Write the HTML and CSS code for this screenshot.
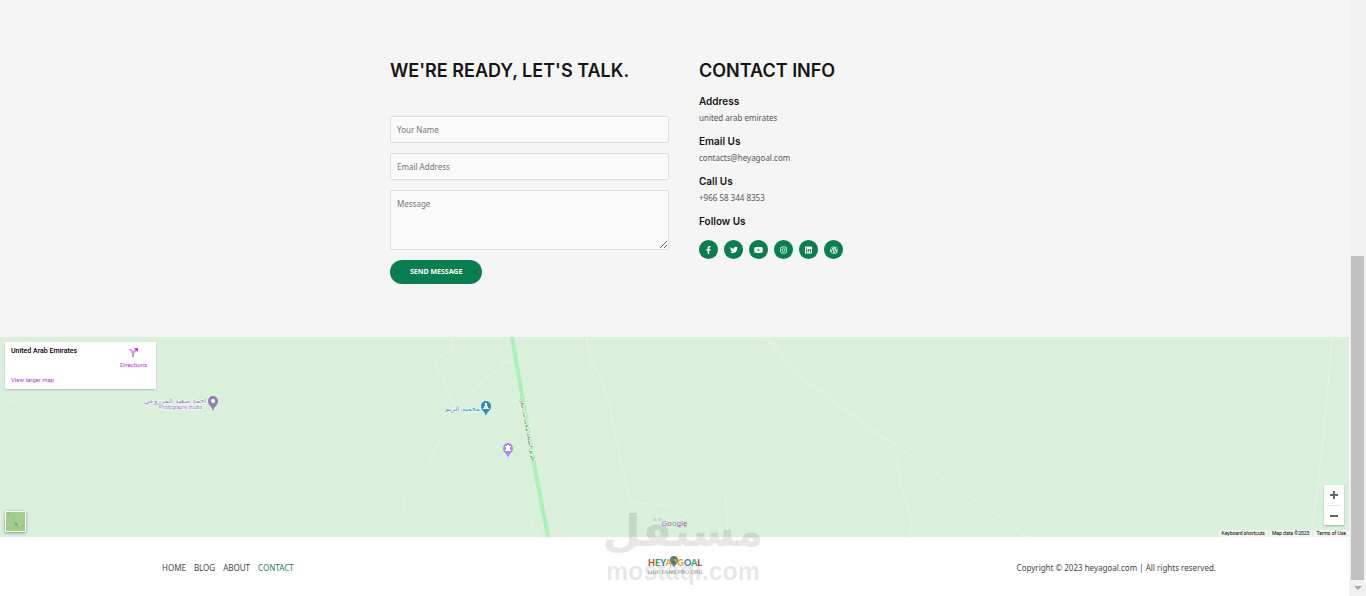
FILE: index.html
```html
<!DOCTYPE html>
<html lang="en">
<head>
<meta charset="utf-8">
<meta name="viewport" content="width=device-width, initial-scale=1">
<title>Contact</title>
<link rel="stylesheet" href="styles.css">
</head>
<body>
<div class="page">
  <main class="contact">
    <section class="talk">
      <h2 class="title">WE'RE READY, LET'S TALK.</h2>
      <form class="form">
        <input class="field" type="text" placeholder="Your Name" aria-label="Your Name">
        <input class="field" type="email" placeholder="Email Address" aria-label="Email Address">
        <textarea class="field field-message" placeholder="Message" aria-label="Message"></textarea>
        <button class="send" type="button">SEND MESSAGE</button>
      </form>
    </section>
    <section class="info">
      <h2 class="title">CONTACT INFO</h2>
      <div class="details">
        <div class="detail"><h3>Address</h3><p>united arab emirates</p></div>
        <div class="detail"><h3>Email Us</h3><p>contacts@heyagoal.com</p></div>
        <div class="detail"><h3>Call Us</h3><p>+966 58 344 8353</p></div>
        <div class="detail"><h3>Follow Us</h3></div>
      </div>
      <div class="social">
        <a href="#" aria-label="Facebook"><svg viewBox="0 0 320 512"><path d="M279 288l14-93h-89v-60c0-25 12-50 52-50h41V7s-37-7-72-7c-73 0-121 44-121 125v70H23v93h81v224h100V288z"/></svg></a>
        <a href="#" aria-label="Twitter"><svg viewBox="0 0 512 512"><path d="M459 152c0 4 0 9 0 13 0 139-106 299-299 299-59 0-115-17-161-47 9 1 17 1 26 1 49 0 94-17 130-45-46-1-85-31-98-73 6 1 13 2 20 2 9 0 19-1 28-4-48-10-84-52-84-103v-1c14 8 30 13 47 13-28-19-47-51-47-87 0-19 5-37 14-53 52 64 129 105 216 110-2-8-3-16-3-24 0-58 47-105 105-105 30 0 57 13 77 33 24-5 46-13 66-25-8 24-24 45-46 58 21-2 42-8 60-16-14 21-32 39-51 54z"/></svg></a>
        <a href="#" aria-label="YouTube"><svg viewBox="0 0 576 512"><path fill-rule="evenodd" d="M550 124c-6-24-25-42-49-49C459 64 288 64 288 64S117 64 75 75c-24 7-43 25-49 49-11 43-11 132-11 132s0 90 11 133c6 23 25 41 49 47 42 12 213 12 213 12s171 0 213-12c24-6 43-24 49-47 11-43 11-133 11-133s0-89-11-132zM232 338V175l143 81z"/></svg></a>
        <a href="#" aria-label="Instagram"><svg viewBox="0 0 448 512"><g fill="none" stroke="currentColor" stroke-width="52"><rect x="26" y="58" width="396" height="396" rx="110"/><circle cx="224" cy="256" r="90"/></g><circle cx="343" cy="137" r="27"/></svg></a>
        <a href="#" aria-label="LinkedIn"><svg viewBox="0 0 448 512"><path fill-rule="evenodd" d="M416 32H32C14 32 0 47 0 64v384c0 18 14 32 32 32h384c18 0 32-14 32-32V64c0-17-14-32-32-32zM135 416H69V202h66zM102 173a38 38 0 1 1 0-77 38 38 0 0 1 0 77zM384 416h-66V312c0-25-1-57-35-57s-40 27-40 55v106h-66V202h64v29h1c9-17 30-35 62-35 67 0 80 45 80 102z"/></svg></a>
        <a href="#" aria-label="WordPress"><svg viewBox="0 0 512 512"><path d="M62 170l92 253A187 187 0 0 1 62 170zm320 76c0-23-8-39-15-51-9-15-18-28-18-43 0-17 13-32 31-32h2a187 187 0 0 0-282 35h12c20 0 50-2 50-2 10-1 11 14 1 15l-22 2 69 206 42-125-30-81-20-2c-10-1-9-16 1-15l50 2 50-2c11-1 12 14 1 15l-22 2 68 204 19-63c9-26 13-46 13-65zm-123 26l-56 163a187 187 0 0 0 115-3zm161-106c5 39-2 76-17 114l-57 165A187 187 0 0 0 420 166zM504 256a248 248 0 1 1-496 0 248 248 0 0 1 496 0zm-24 0a224 224 0 1 0-448 0 224 224 0 0 0 448 0z"/></svg></a>
      </div>
    </section>
  </main>

  <section class="map" aria-label="Map">
    <svg class="map-canvas" viewBox="0 0 1349 200" preserveAspectRatio="xMidYMid slice">
      <path class="tiles" d="M72.500 0V200M200.500 0V200M328.500 0V200M456.500 0V200M584.500 0V200M712.500 0V200M840.500 0V200M968.500 0V200M1096.500 0V200M1224.500 0V200"/>
      <g class="tracks">
        <path d="M36 0L30 5M20 55L15 60 12 64 4 63"/>
        <path d="M452 0V13L434 23 455 69 466 65 474 54 485 41 502 30V27L513 24"/>
        <path d="M442 98L431 121 428 130 420 141 403 160 405 170 383 195"/>
        <path d="M586 0L592 25 602 43 608 60 619 115 630 165 673 169 710 195"/>
        <path d="M765 0L797 39 882 101M768 0L800 38 884 100 917 123 970 160 989 172 1026 200"/>
        <path d="M883 101L898 124V136L911 180 910 200"/>
        <path d="M530 185L540 200M725 153L728 200M1332 0L1327 60 1318 150 1311 195"/>
      </g>
      <path class="highway" d="M512 0L533 122 548 200"/>
      <text class="road-name" transform="translate(520 62) rotate(79)">طريق الشيخة سلامة بنت بطي</text>
      <text class="place studio" x="144" y="66">احمد سعيد المزروعي</text>
      <text class="place studio sub" x="159" y="72">Photography studio</text>
      <text class="place reserve" x="445" y="74">محمية الريم</text>
      <g transform="translate(213 67)"><path fill="#8f83ae" d="M0 7C-1 2-5 2-5-3a5 5 0 0 1 10 0C5 2 1 2 0 7z"/><circle cy="-3" r="2" fill="#fff"/></g>
      <g transform="translate(486 72)"><path fill="#2e8bc5" d="M0 7C-1 2-5 2-5-3a5 5 0 0 1 10 0C5 2 1 2 0 7z"/><path fill="#fff" d="M-1-6h2v3h1v2h1v1h-6v-1h1v-2h1z"/></g>
      <g transform="translate(508 114)"><path fill="#a28bff" d="M0 7C-1 2-5 2-5-3a5 5 0 0 1 10 0C5 2 1 2 0 7z"/><path fill="#fff" d="M-1-6h2v1h2v1h-1v3h1v1h-6v-1h1v-3h-1v-1h2z"/></g>
    </svg>
    <div class="place-card">
      <div class="place-text">
        <strong>United Arab Emirates</strong>
        <a href="#">View larger map</a>
      </div>
      <a class="directions" href="#">
        <svg viewBox="0 0 10 10"><path d="M4 10V6L1 2M4 6L8 2" fill="none" stroke="#d98be8" stroke-width="2"/><path d="M5 1h4v4z" fill="#b838d0"/></svg>
        Directions
      </a>
    </div>
    <button class="satellite" type="button" aria-label="Show satellite imagery"><svg viewBox="0 0 20 20"><path fill="#a2cc8c" d="M0 0h20v20H0z"/><path fill="#8fe3a3" d="M5 7h1v2H5zM9 3h1v1H9zM12 2h2v1h-2zM15 5h1v2h-1zM7 5h1v1H7zM12 7h1v1h-1zM17 3h1v2h-1zM3 9h1v1H3z"/><path fill="#5d8f83" d="M2 1h1v1H2zM10 12h2v2h-2zM9 11h1v1H9zM12 15h1v1h-1zM17 14h1v1h-1z"/></svg></button>
    <div class="google" aria-label="Google"><span class="g1">G</span><span class="g2">o</span><span class="g3">o</span><span class="g1">g</span><span class="g4">l</span><span class="g2">e</span></div>
    <div class="zoom">
      <button type="button" aria-label="Zoom in"><svg viewBox="0 0 8 8"><path d="M3 0h2v3h3v2H5v3H3V5H0V3h3z"/></svg></button>
      <button type="button" aria-label="Zoom out"><svg viewBox="0 0 8 8"><path d="M0 3h8v2H0z"/></svg></button>
    </div>
    <div class="terms"><a href="#">Keyboard shortcuts</a><span>Map data ©2023</span><a href="#">Terms of Use</a></div>
  </section>

  <footer class="footer">
    <nav class="nav"><a href="#">HOME</a><a href="#">BLOG</a><a href="#">ABOUT</a><a class="current" href="#">CONTACT</a></nav>
    <a class="logo" href="#" aria-label="Heya Goal">
      <svg viewBox="0 0 54 20">
        <g class="logo-name"><text x="0" y="10"><tspan fill="#b8511f">H</tspan><tspan fill="#3fa548">E</tspan><tspan fill="#2c86c8">Y</tspan><tspan fill="#e99a2c">A</tspan></text><text x="54" y="10" text-anchor="end"><tspan fill="#e99a2c">G</tspan><tspan fill="#2c86c8">O</tspan><tspan fill="#3fa548">A</tspan><tspan fill="#b8515f">L</tspan></text></g>
        <path fill="#6b7780" d="M22 4a4 4 0 0 1 8 0c0 3-2 4-4 7-2-3-4-4-4-7z"/><path fill="#35a060" d="M23 2h3v3h-3z"/><path fill="#ef8c28" d="M26 3h3v3h-3z"/><path fill="#2c6fa8" d="M24 5h3v2h-3z"/>
        <text class="logo-tag" x="27" y="18" text-anchor="middle">LINK FANS PRO.ORG</text>
      </svg>
    </a>
    <p class="copyright">Copyright © 2023 heyagoal.com | All rights reserved.</p>
  </footer>
</div>
<div class="scrollbar" aria-hidden="true"><div class="thumb"></div><svg viewBox="0 0 8 4"><path d="M0 0h8L4 4z"/></svg></div>
<div class="watermark" aria-hidden="true"><span class="mark-ar">مستقل</span><span class="mark-en">mostaql.com</span></div>
</body>
</html>
```

FILE: styles.css
```css
* { box-sizing: border-box; }
body {
  margin: 0;
  display: flex;
  min-height: 100vh;
  position: relative;
  overflow: hidden;
  background: #fff;
  color: #555;
  font: 8px/14px "Noto Sans", sans-serif;
}
h2, h3, p { margin: 0; }
a { color: inherit; text-decoration: none; }
button { border: 0; padding: 0; font: inherit; cursor: pointer; }
.page { flex: 1; min-width: 0; display: flex; flex-direction: column; }

.contact {
  display: grid;
  grid-template-columns: 279px 260px;
  gap: 30px;
  justify-content: center;
  padding: 59px 0 53px;
  background: #f5f5f5;
}
.title { font: 600 18px/24px Inter, sans-serif; color: #151515; white-space: nowrap; }
.form { display: flex; flex-direction: column; align-items: flex-start; gap: 10px; margin-top: 33px; }
.field {
  display: block;
  width: 100%;
  height: 27px;
  padding: 0 6px;
  border: 1px solid #ddd;
  border-radius: 2px;
  background: #fafafa;
  color: #555;
  font: inherit;
}
.field::placeholder { color: #757575; }
.field-message { height: 60px; padding: 6px; resize: vertical; }
.send {
  height: 24px;
  padding: 0 20px;
  border-radius: 12px;
  background: #0a7e4e;
  color: #fff;
  font-size: 7px;
  font-weight: 700;
}
.details { display: grid; gap: 10px; margin-top: 11px; }
.detail h3 { font: 600 10px/14px Inter, sans-serif; color: #151515; }
.detail p { margin-top: 3px; line-height: 13px; }
.social { display: flex; gap: 6px; margin-top: 12px; }
.social a {
  display: grid;
  place-items: center;
  width: 19px;
  height: 19px;
  border-radius: 50%;
  background: #0a7e4e;
  color: #fff;
}
.social svg { height: 8px; fill: currentColor; }

.map { position: relative; height: 200px; background: #daefdc; overflow: hidden; font-family: Roboto, sans-serif; }
.map-canvas { display: block; width: 100%; height: 100%; }
.tiles { stroke: #d7edda; }
.tracks { fill: none; stroke: #e6f6e3; stroke-width: 1; }
.highway { fill: none; stroke: #a9f1b5; stroke-width: 4; }
.place, .road-name { font-family: "DejaVu Sans", sans-serif; stroke: #fff; stroke-width: 1px; paint-order: stroke; }
.place { font-size: 7px; }
.studio { fill: #8f83ae; }
.sub { font-family: Roboto, sans-serif; font-size: 5px; }
.reserve { fill: #3f8fd0; }
.road-name { font-size: 5px; fill: #3e7d4c; }
.place-card {
  position: absolute;
  top: 5px;
  left: 5px;
  display: flex;
  justify-content: space-between;
  width: 151px;
  height: 47px;
  padding: 5px 9px 5px 6px;
  border-radius: 1px;
  background: #fff;
  box-shadow: 0 1px 2px #0003;
  font-size: 6px;
  line-height: 9px;
  color: #b22fc8;
}
.place-text { display: flex; flex-direction: column; justify-content: space-between; }
.place-text strong { font-size: 7px; font-weight: 500; color: #000; }
.directions { display: flex; flex-direction: column; align-items: center; gap: 3px; }
.directions svg { width: 10px; height: 10px; }
.satellite {
  position: absolute;
  left: 5px;
  bottom: 5px;
  width: 21px;
  height: 21px;
  border: 1px solid #fff;
  border-radius: 1px;
  box-shadow: 0 1px 3px #0006;
}
.satellite svg { display: block; width: 100%; height: 100%; }
.google { position: absolute; left: 0; right: 0; bottom: 7px; text-align: center; font-size: 8px; line-height: 12px; }
.g1 { color: #c06be0; }
.g2 { color: #b06a4c; }
.g3 { color: #5cbf70; }
.g4 { color: #4f9be0; }
.zoom {
  position: absolute;
  right: 5px;
  bottom: 12px;
  display: grid;
  width: 20px;
  padding: 0 3px;
  border-radius: 1px;
  background: #fff;
  box-shadow: 0 1px 2px #0004;
}
.zoom button { display: grid; place-items: center; height: 20px; background: none; }
.zoom button + button { border-top: 1px solid #e6e6e6; }
.zoom svg { width: 8px; height: 8px; fill: #666; }
.terms { position: absolute; right: 0; bottom: 0; display: flex; gap: 1px; font-size: 5px; line-height: 7px; color: #000; }
.terms > * { padding: 0 3px; background: #f1f3f1; }

.footer {
  flex: 1;
  display: grid;
  grid-template-columns: 1fr auto 1fr;
  align-items: center;
  width: 100%;
  max-width: 1083px;
  margin: 0 auto;
  padding-top: 3px;
}
.nav { display: flex; gap: 8px; padding-left: 29px; color: #444; }
.current { color: #2b7a62; }
.logo { padding-bottom: 4px; }
.logo svg { display: block; width: 54px; height: 20px; overflow: visible; }
.logo-name { font: 900 9px Lato, sans-serif; }
.logo-tag { font: 6px Roboto, sans-serif; fill: #999; }
.copyright { text-align: right; color: #444; }

.scrollbar {
  display: flex;
  flex-direction: column;
  align-items: center;
  justify-content: flex-end;
  gap: 6px;
  width: 17px;
  padding-bottom: 6px;
  background: #f1f1f1;
}
.thumb { width: 13px; height: 324px; background: #c1c1c1; }
.scrollbar svg { width: 8px; height: 4px; fill: #a3a9a3; }

.watermark {
  position: absolute;
  left: 0;
  right: 0;
  bottom: 12px;
  display: grid;
  justify-items: center;
  color: #0000001a;
  pointer-events: none;
}
.mark-ar { font: 700 44px/54px "DejaVu Sans", sans-serif; }
.mark-en { font: 700 25px/26px "Liberation Sans", sans-serif; }
```
